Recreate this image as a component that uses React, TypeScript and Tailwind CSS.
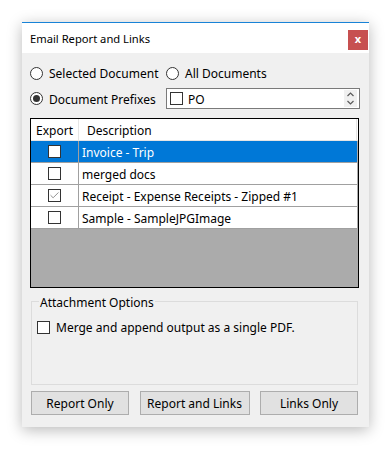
import { Check } from 'lucide-react';

type Row = { text: string; checked: boolean; selected: boolean };

const rows: Row[] = [
  { text: 'Invoice - Trip', checked: false, selected: true },
  { text: 'merged docs', checked: false, selected: false },
  { text: 'Receipt - Expense Receipts - Zipped #1', checked: true, selected: false },
  { text: 'Sample - SampleJPGImage', checked: false, selected: false },
];

function Radio({ on }: { on?: boolean }) {
  return (
    <div className="w-[13px] h-[13px] rounded-full border border-[#333333] bg-white flex items-center justify-center shrink-0">
      {on && <div className="w-[7px] h-[7px] rounded-full bg-[#333333]" />}
    </div>
  );
}

function CheckBox({ checked }: { checked?: boolean }) {
  return (
    <div className="w-[13px] h-[13px] border border-[#333333] bg-white flex items-center justify-center shrink-0">
      {checked && <Check className="w-[11px] h-[11px] text-[#606060]" strokeWidth={1.5} />}
    </div>
  );
}

function Spinner() {
  return (
    <div className="ml-auto mr-[2px] w-[13px] h-[17px] bg-[#f0f0f0] flex items-center justify-center">
      <svg width="9" height="15" viewBox="0 0 9 15" fill="none" stroke="#5a5a5a" strokeWidth="1.2">
        <path d="M1.5 5 L4.5 2 L7.5 5" />
        <path d="M1.5 10 L4.5 13 L7.5 10" />
      </svg>
    </div>
  );
}

export default function App() {
  return (
    <div className="w-[391px] h-[453px] bg-white pl-[22px] pt-[22px] font-['Noto_Sans',sans-serif] text-[12px] text-black leading-none">
      <div className="w-[347px] h-[405px] flex flex-col bg-[#f0f0f0] border-t border-[#1883d7] shadow-[0_3px_14px_rgba(0,0,0,0.28)]">
        {/* title bar */}
        <div className="h-[30px] bg-white flex items-center justify-between pl-[8px] pr-[1px]">
          <span className="text-[11.2px] pt-[2px]">Email Report and Links</span>
          <div className="w-[20px] h-[20px] mt-[3px] bg-[#c75050] flex items-center justify-center text-white text-[11px] font-bold pb-[2px]">
            x
          </div>
        </div>

        <div className="px-[8px] flex flex-col">
          {/* radios */}
          <div className="mt-[10px] h-[20px] flex items-center">
            <div className="w-[136px] flex items-center gap-[6px]">
              <Radio />
              <span className="pt-[2px]">Selected Document</span>
            </div>
            <div className="flex items-center gap-[6px]">
              <Radio />
              <span className="pt-[2px]">All Documents</span>
            </div>
          </div>

          <div className="mt-[5px] h-[21px] flex items-center">
            <div className="w-[136px] flex items-center gap-[6px]">
              <Radio on />
              <span className="pt-[2px]">Document Prefixes</span>
            </div>
            <div className="w-[194px] h-[21px] border border-[#7a7a7a] bg-white flex items-center pl-[3px]">
              <CheckBox />
              <span className="ml-[5px] pt-[2px]">PO</span>
              <Spinner />
            </div>
          </div>

          {/* grid */}
          <div className="mt-[9px] w-[329px] h-[170px] border border-black bg-[#ababab] flex flex-col">
            <div className="h-[22px] bg-white flex border-b border-[#e5e5e5]">
              <div className="w-[48px] border-r border-[#e5e5e5] flex items-center justify-center pt-[3px]">Export</div>
              <div className="flex-1 flex items-center pl-[8px] pt-[3px] border-r border-[#e5e5e5] mr-[1px]">Description</div>
            </div>
            {rows.map((r) => (
              <div
                key={r.text}
                className={
                  'w-[326px] h-[22px] flex border-b border-[#a0a0a0] ' +
                  (r.selected ? 'bg-[#0078d7] text-white' : 'bg-white')
                }
              >
                <div className="w-[48px] border-r border-[#a0a0a0] flex items-center justify-center">
                  <CheckBox checked={r.checked} />
                </div>
                <div className="flex-1 flex items-center pl-[3px] pt-[3px]">{r.text}</div>
              </div>
            ))}
          </div>

          {/* attachment options */}
          <div className="relative mt-[13px] ml-[1px] w-[327px] h-[84px] border border-[#dcdcdc] pt-[18px] pl-[5px]">
            <span className="absolute left-[7px] -top-[8px] px-[1px] bg-[#f0f0f0] leading-[16px] pt-[1px]">Attachment Options</span>
            <div className="flex items-center gap-[6px]">
              <CheckBox />
              <span className="pt-[2px]">Merge and append output as a single PDF.</span>
            </div>
          </div>

          {/* buttons */}
          <div className="mt-[6px] ml-[1px] w-[327px] flex justify-between">
            <button className="w-[98px] h-[24px] bg-[#e1e1e1] border border-[#adadad] pt-[2px]">Report Only</button>
            <button className="w-[110px] h-[24px] bg-[#e1e1e1] border border-[#adadad] pt-[2px]">Report and Links</button>
            <button className="w-[98px] h-[24px] bg-[#e1e1e1] border border-[#adadad] pt-[2px]">Links Only</button>
          </div>
        </div>
      </div>
    </div>
  );
}
